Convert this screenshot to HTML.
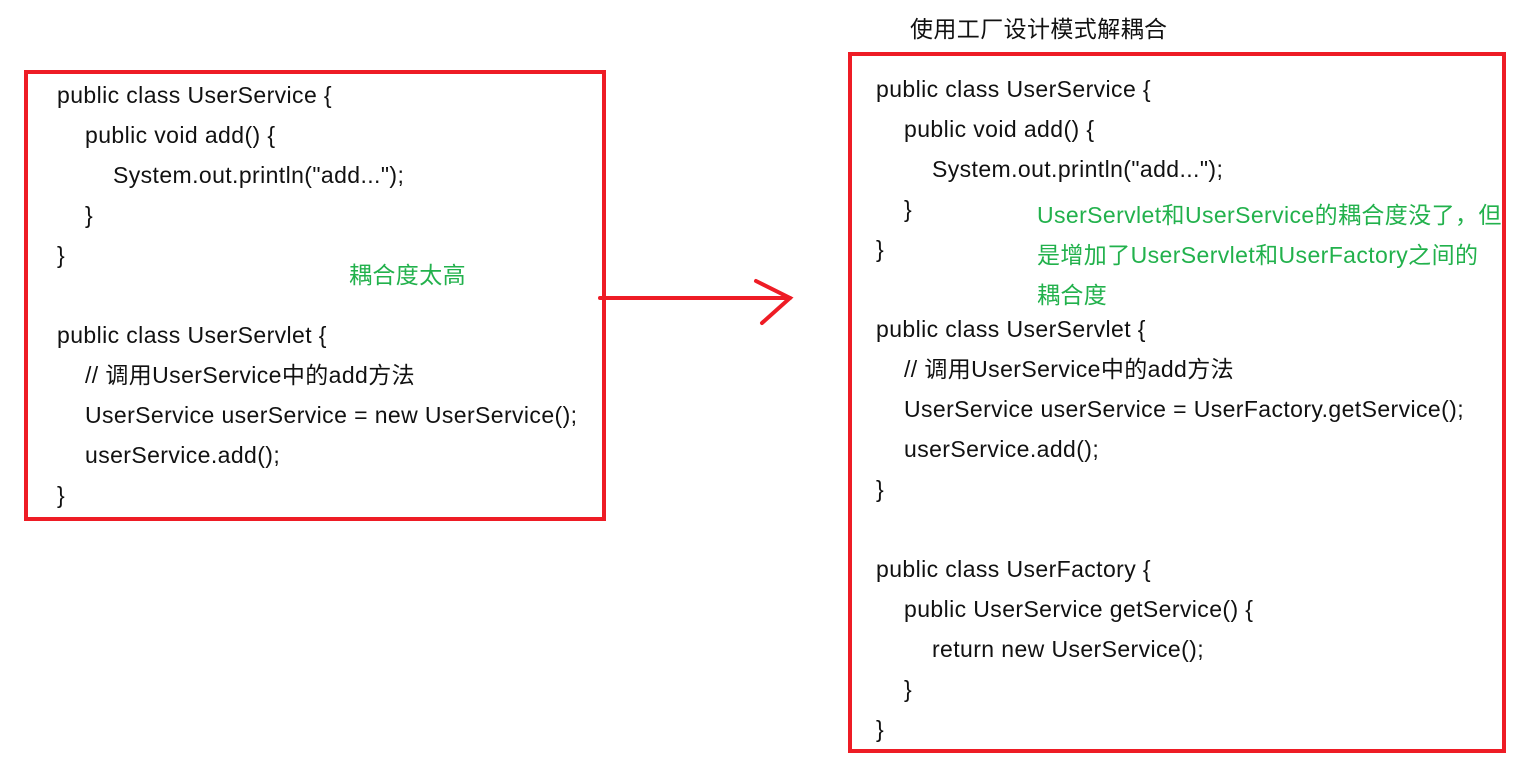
<!DOCTYPE html><html><head><meta charset="utf-8"><style>
body{margin:0;width:1521px;height:763px;background:#fff;position:relative;overflow:hidden;font-family:"Liberation Sans","Noto Sans CJK SC",sans-serif;font-size:23px;letter-spacing:0.4px;color:#111}
.box{position:absolute;border:4px solid #ee1c25;box-sizing:border-box}
.t{position:absolute;white-space:nowrap;line-height:26px}
.g{color:#22b14c}
</style></head><body>
<div class="box" style="left:24px;top:70px;width:582px;height:451px"></div>
<div class="box" style="left:848px;top:52px;width:658px;height:701px"></div>
<svg style="position:absolute;left:0;top:0" width="1521" height="763"><g stroke="#ee1c25" stroke-width="4" fill="none" stroke-linecap="round"><line x1="600" y1="298" x2="790" y2="298"/><polyline points="756,281 790,298 762,323"/></g></svg>
<div class="t" style="left:57px;top:82px">public class UserService {</div>
<div class="t" style="left:85px;top:122px">public void add() {</div>
<div class="t" style="left:113px;top:162px">System.out.println("add...");</div>
<div class="t" style="left:85px;top:202px">}</div>
<div class="t" style="left:57px;top:242px">}</div>
<div class="t g" style="left:349px;top:262px">耦合度太高</div>
<div class="t" style="left:57px;top:322px">public class UserServlet {</div>
<div class="t" style="left:85px;top:362px">// 调用UserService中的add方法</div>
<div class="t" style="left:85px;top:402px">UserService userService = new UserService();</div>
<div class="t" style="left:85px;top:442px">userService.add();</div>
<div class="t" style="left:57px;top:482px">}</div>
<div class="t" style="left:910px;top:16px">使用工厂设计模式解耦合</div>
<div class="t" style="left:876px;top:76px">public class UserService {</div>
<div class="t" style="left:904px;top:116px">public void add() {</div>
<div class="t" style="left:932px;top:156px">System.out.println("add...");</div>
<div class="t" style="left:904px;top:196px">}</div>
<div class="t" style="left:876px;top:236px">}</div>
<div class="t g" style="left:1037px;top:202px">UserServlet和UserService的耦合度没了，但</div>
<div class="t g" style="left:1037px;top:242px">是增加了UserServlet和UserFactory之间的</div>
<div class="t g" style="left:1037px;top:282px">耦合度</div>
<div class="t" style="left:876px;top:316px">public class UserServlet {</div>
<div class="t" style="left:904px;top:356px">// 调用UserService中的add方法</div>
<div class="t" style="left:904px;top:396px">UserService userService = UserFactory.getService();</div>
<div class="t" style="left:904px;top:436px">userService.add();</div>
<div class="t" style="left:876px;top:476px">}</div>
<div class="t" style="left:876px;top:556px">public class UserFactory {</div>
<div class="t" style="left:904px;top:596px">public UserService getService() {</div>
<div class="t" style="left:932px;top:636px">return new UserService();</div>
<div class="t" style="left:904px;top:676px">}</div>
<div class="t" style="left:876px;top:716px">}</div>
</body></html>
